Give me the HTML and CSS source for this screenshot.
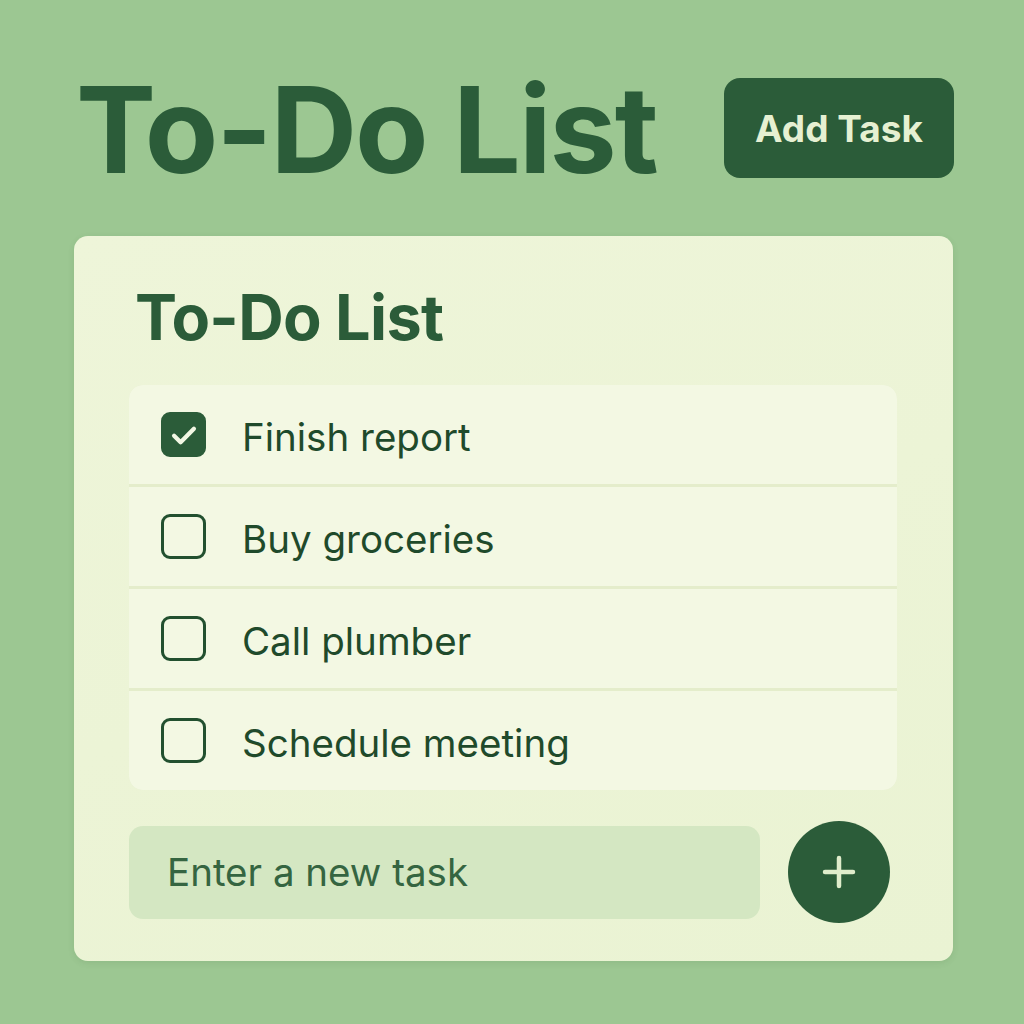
FILE: index.html
```html
<!DOCTYPE html>
<html lang="en">
<head>
<meta charset="utf-8">
<title>To-Do List</title>
<link rel="stylesheet" href="styles.css">
</head>
<body>
<div class="page">
  <header class="header">
    <h1 class="title">To-Do List</h1>
    <button class="add-btn" type="button">Add Task</button>
  </header>
  <main class="card">
    <h2 class="card-title">To-Do List</h2>
    <ul class="list">
      <li class="item">
        <span class="box checked">
          <svg viewBox="0 0 24 24" width="34" height="34"><path d="M5 12.5l4.6 4.6L19 7.6" fill="none" stroke="#f2f7e4" stroke-width="3" stroke-linecap="round" stroke-linejoin="round"/></svg>
        </span>
        <span class="label">Finish report</span>
      </li>
      <li class="item"><span class="box"></span><span class="label">Buy groceries</span></li>
      <li class="item"><span class="box"></span><span class="label">Call plumber</span></li>
      <li class="item"><span class="box"></span><span class="label">Schedule meeting</span></li>
    </ul>
    <div class="entry">
      <div class="input">Enter a new task</div>
      <button class="plus" type="button" aria-label="Add">
        <svg viewBox="0 0 40 40" width="40" height="40"><path d="M20 6v28M6 20h28" stroke="#dfeccb" stroke-width="4.5" stroke-linecap="round"/></svg>
      </button>
    </div>
  </main>
</div>
</body>
</html>
```
FILE: styles.css
```css
* { box-sizing: border-box; }
html, body { margin: 0; padding: 0; }
body {
  width: 1024px;
  height: 1024px;
  background: #9cc792;
  font-family: Inter, "Noto Sans", "Liberation Sans", sans-serif;
  color: #2b5c39;
  overflow: hidden;
}
.page {
  padding: 78px 70px 0 74px;
}
.header {
  display: flex;
  align-items: center;
  justify-content: space-between;
  height: 100px;
}
.title {
  margin: 0;
  font-size: 120px;
  font-weight: 700;
  letter-spacing: -2px;
  line-height: 1;
  color: #2b5c39;
  padding-left: 2px;
  padding-top: 4px;
}
.add-btn {
  width: 230px;
  height: 100px;
  border: none;
  border-radius: 16px;
  background: #2b5c39;
  color: #e6f0d2;
  font-family: inherit;
  font-size: 37px;
  font-weight: 700;
  padding: 0;
}
.card {
  margin-top: 58px;
  width: 879px;
  background: linear-gradient(160deg, #eef5d9 0%, #eaf3d3 100%);
  border-radius: 14px;
  padding: 44px 56px 38px 55px;
  box-shadow: 0 2px 6px rgba(60, 100, 50, 0.12);
}
.card-title {
  margin: 0 0 30px 6px;
  font-size: 63px;
  font-weight: 700;
  line-height: 75px;
  letter-spacing: -0.7px;
  color: #2b5c39;
}
.list {
  list-style: none;
  margin: 0;
  padding: 0;
  background: #e4edcb;
  border-radius: 14px;
  display: flex;
  flex-direction: column;
  gap: 3px;
  overflow: hidden;
}
.item {
  height: 99px;
  background: #f3f8e3;
  display: flex;
  align-items: center;
  padding-left: 32px;
}
.box {
  width: 45px;
  height: 45px;
  border: 3px solid #22502f;
  border-radius: 9px;
  flex: none;
  display: flex;
  align-items: center;
  justify-content: center;
}
.box.checked {
  background: #2b5c39;
  border-color: #2b5c39;
}
.label {
  margin-left: 36px;
  font-size: 38.5px;
  color: #1f4a2b;
  padding-top: 4px;
}
.entry {
  margin-top: 31px;
  display: flex;
  align-items: center;
  gap: 28px;
}
.input {
  width: 631px;
  height: 93px;
  border-radius: 14px;
  background: #d4e7c2;
  display: flex;
  align-items: center;
  padding-left: 38px;
  font-size: 38.5px;
  color: #356541;
}
.plus {
  width: 102px;
  height: 102px;
  border-radius: 50%;
  border: none;
  background: #2b5c39;
  display: flex;
  align-items: center;
  justify-content: center;
  padding: 0;
}
```
